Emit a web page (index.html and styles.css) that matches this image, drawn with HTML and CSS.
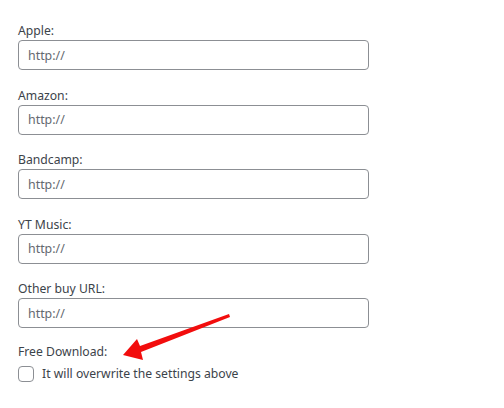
FILE: index.html
```html
<!DOCTYPE html>
<html>
<head>
<meta charset="utf-8">
<link rel="stylesheet" href="styles.css">
</head>
<body>
<div class="form">
  <div class="field">
    <label class="lbl">Apple:</label>
    <input class="inp" type="text" placeholder="http://">
  </div>
  <div class="field">
    <label class="lbl">Amazon:</label>
    <input class="inp" type="text" placeholder="http://">
  </div>
  <div class="field">
    <label class="lbl">Bandcamp:</label>
    <input class="inp" type="text" placeholder="http://">
  </div>
  <div class="field">
    <label class="lbl">YT Music:</label>
    <input class="inp" type="text" placeholder="http://">
  </div>
  <div class="field">
    <label class="lbl">Other buy URL:</label>
    <input class="inp" type="text" placeholder="http://">
  </div>
  <div class="field free">
    <label class="lbl">Free Download:</label>
    <label class="check"><span class="box"></span><span>It will overwrite the settings above</span></label>
  </div>
</div>
<svg class="arrow" width="504" height="408" viewBox="0 0 504 408">
  <polygon points="229,314 140,346 137,339 123,355 143,360 141,352 230,317" fill="#f20d0d"/>
</svg>
</body>
</html>
```
FILE: styles.css
```css
html, body { margin: 0; padding: 0; background: #fff; }
body {
  font-family: "Noto Sans", "Open Sans", sans-serif;
  font-size: 12.2px;
  color: #3c434a;
  position: relative;
  width: 504px;
  height: 408px;
  overflow: hidden;
}
.form {
  padding: 20px 0 0 18px;
  display: flex;
  flex-direction: column;
  gap: 14.5px;
}
.field { display: flex; flex-direction: column; }
.lbl { line-height: 18px; height: 18px; padding-top: 2px; display: block; }
.inp {
  box-sizing: border-box;
  width: 351px;
  height: 30px;
  border: 1px solid #8c8f94;
  border-radius: 4px;
  padding: 0 9px;
  font-family: inherit;
  font-size: 12.4px;
  color: #2c3338;
  outline: none;
  margin: 0;
}
.inp::placeholder { color: #646970; }
.free { gap: 4px; margin-top: -1.5px; }
.check { display: flex; align-items: center; gap: 8px; }
.box {
  box-sizing: border-box;
  width: 16px; height: 16px;
  border: 1px solid #8c8f94;
  border-radius: 4px;
  background: #fff;
}
.arrow { position: absolute; left: 0; top: 0; pointer-events: none; }
```
